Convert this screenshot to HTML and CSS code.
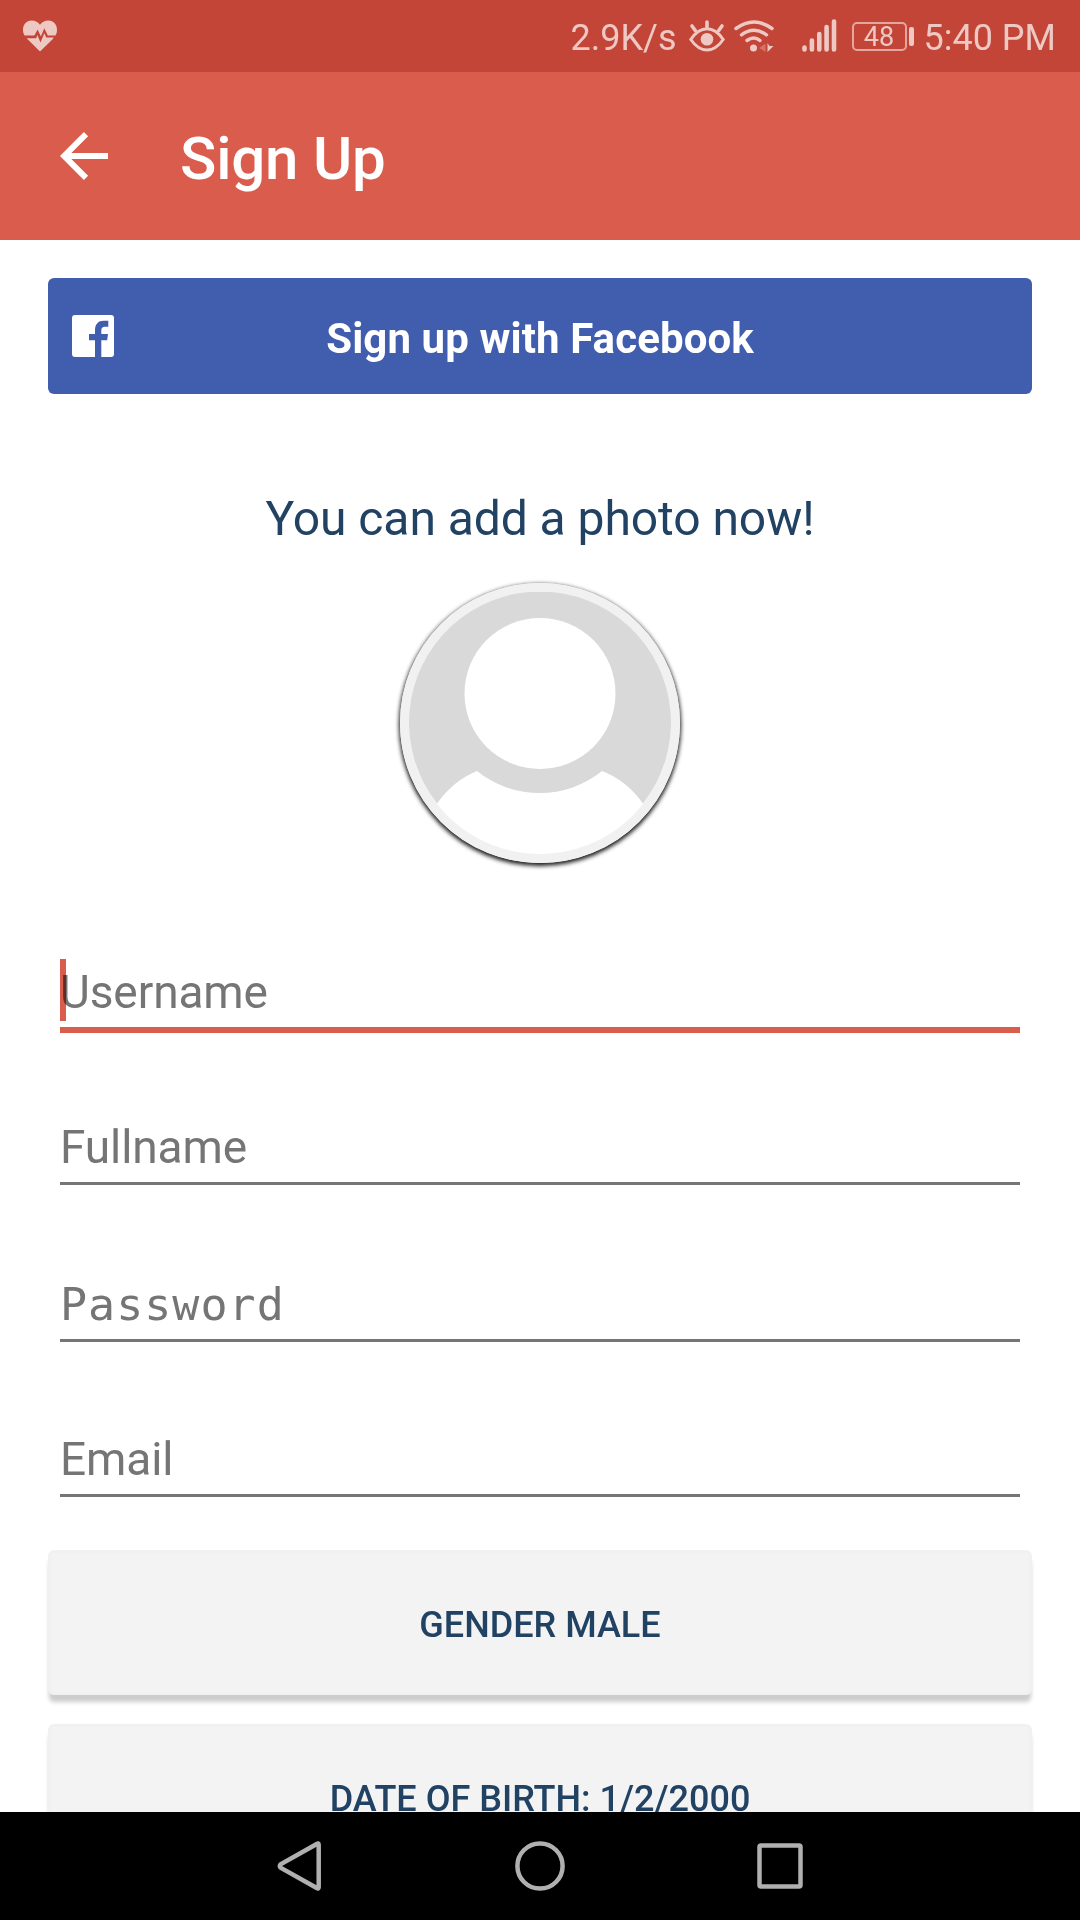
FILE: index.html
```html
<!DOCTYPE html>
<html lang="en">
<head>
    <meta charset="UTF-8">
    <meta name="viewport" content="width=device-width, initial-scale=1.0">
    <title>Sign Up</title>
    <link rel="stylesheet" href="styles.css">
</head>
<body>
    <div class="status-bar">
        <svg class="icon-heart" width="36" height="32" viewBox="0 0 36 32">
            <path fill="currentColor" d="M2.6 15.6C-1.2 9.500 2 .6 9.600 .6C13.400 .6 16.200 2.500 18 4.800C19.800 2.500 22.600 .6 26.400 .6C34 .6 37.200 9.500 33.400 15.6H25.800L22.300 8.300L18.900 16.600L15.600 9.500L12.400 15.6ZM4.600 18.200H14.200L15.400 15L18.500 22.400L22.300 13.200L24.300 17.600H31.800L30.600 19.200L18 31.600Z"/>
        </svg>

        <div class="status-right">
            <span class="speed">2.9K/s</span>
            <svg class="icon-eye" width="36" height="32" viewBox="0 0 36 32">
                <g fill="none" stroke="currentColor" stroke-width="3" stroke-linecap="round">
                    <path d="M1.800 19.500Q9 8.800 18 8.800T34.200 19.500Q27 30 18 30T1.800 19.500Z"/>
                    <path stroke-width="3.600" d="M18 2V7M3 6L6.300 10.500M33 6L29.700 10.500"/>
                </g>
                <circle cx="18" cy="19.300" r="6.300" fill="currentColor"/>
            </svg>
            <svg class="icon-wifi" width="40" height="32" viewBox="0 0 40 32">
                <g fill="none" stroke="currentColor" stroke-width="3.500" stroke-linecap="round">
                    <path d="M2 8.500Q20 -4.500 38 8.500"/>
                    <path d="M7.500 14.800Q20 5.800 32.500 14.800"/>
                    <path d="M13 20.500Q20 15.500 26 20.500"/>
                </g>
                <circle cx="19.500" cy="28" r="3.500" fill="currentColor"/>
                <path fill="currentColor" opacity=".35" d="M25 28L31.500 23.500V32Z"/>
                <path fill="currentColor" d="M33.500 23L35.500 26H39.500L33.500 32Z"/>
            </svg>
            <svg class="icon-signal" width="35" height="34" viewBox="0 0 35 34">
                <g stroke="currentColor" stroke-width="4.600" stroke-linecap="round">
                    <path d="M2.500 28.500V30.500M9.900 21.500V30.500M17.300 15V30.500M24.600 8V30.500M32 2.500V30.500"/>
                </g>
            </svg>
            <div class="battery"><span>48</span></div>
            <span class="clock">5:40 PM</span>
        </div>
    </div>

    <div class="app-bar">
        <svg class="icon-back" width="48" height="48" viewBox="0 0 48 48">
            <path fill="none" stroke="#fff" stroke-width="6" d="M48 24H5M26 2.200L4.200 24L26 45.800"/>
        </svg>
        <h1>Sign Up</h1>
    </div>

    <div class="content">
        <button type="button" class="facebook-button">
            <svg class="icon-facebook" width="42" height="42" viewBox="0 0 42 42">
                <rect width="42" height="42" rx="3" fill="#fff"/>
                <path fill="#415dae" d="M23 42V25.300H17V19H23V15C23 9 26.500 5.700 31.500 5.700H36.300V11.700H33C30.400 11.700 29.300 13 29.300 15.300V19H36L35.200 25.300H29.300V42Z"/>
            </svg>
            Sign up with Facebook
        </button>

        <p class="photo-text">You can add a photo now!</p>

        <div class="avatar">
            <svg width="262" height="262" viewBox="0 0 262 262">
                <path fill="#d9d9d9" d="M28 211.500A131 131 0 1 1 234 211.500Q217 188 193 179A99.500 99.500 0 0 1 68 179Q45 188 28 211.500Z"/>
                <circle cx="131" cy="101.500" r="75.500" fill="#fff"/>
            </svg>
        </div>

        <form class="signup-form">
            <div class="field focused">
                <input type="text" name="username" placeholder="Username">
                <span class="caret"></span>
            </div>
            <div class="field">
                <input type="text" name="fullname" placeholder="Fullname">
            </div>
            <div class="field password">
                <input type="password" name="password" placeholder="Password">
            </div>
            <div class="field">
                <input type="email" name="email" placeholder="Email">
            </div>

            <button type="button" class="option-button">GENDER MALE</button>
            <button type="button" class="option-button">DATE OF BIRTH: 1/2/2000</button>
        </form>
    </div>

    <div class="nav-bar">
        <svg width="52" height="52" viewBox="0 0 52 52">
            <path d="M44.700 4.700V47.300Q44.700 49.500 42.700 48L7 28Q4.500 26 7 24L42.700 4Q44.700 2.500 44.700 4.700Z"/>
        </svg>
        <svg width="52" height="52" viewBox="0 0 52 52">
            <circle cx="26" cy="26" r="22.600"/>
        </svg>
        <svg width="52" height="52" viewBox="0 0 52 52">
            <rect x="5.500" y="5.500" width="41" height="41" rx="1.500"/>
        </svg>
    </div>
</body>
</html>
```
FILE: styles.css
```css
* {
    box-sizing: border-box;
}
body {
    margin: 0;
    height: 1920px;
    display: flex;
    flex-direction: column;
    overflow: hidden;
    background-color: #fff;
    font-family: Roboto, sans-serif;
}
svg {
    display: block;
    flex: none;
}

/* Status bar */
.status-bar {
    flex: none;
    height: 72px;
    display: flex;
    align-items: center;
    justify-content: space-between;
    padding: 0 24px 0 22px;
    background-color: #c24537;
    color: #eec8c3;
    font-size: 36px;
}
.status-right {
    display: flex;
    align-items: center;
}
.speed,
.clock {
    line-height: 42px;
    padding-top: 3px;
}
.icon-eye {
    margin-left: 12px;
}
.icon-wifi {
    margin-left: 9px;
}
.icon-signal {
    margin-left: 28px;
}
.battery {
    position: relative;
    width: 55px;
    height: 29px;
    margin: 0 17px 0 15px;
    border: 2px solid #e3a79f;
    border-radius: 5px;
    font-size: 27px;
    line-height: 26px;
    text-align: center;
}
.battery::after {
    content: "";
    position: absolute;
    top: 3px;
    right: -9px;
    width: 5px;
    height: 19px;
    border-radius: 2px;
    background-color: #eec8c3;
}

/* App bar */
.app-bar {
    flex: none;
    height: 168px;
    display: flex;
    align-items: center;
    padding-left: 60px;
    background-color: #da5c4c;
}
.app-bar h1 {
    margin: 0 0 0 72px;
    padding-top: 5px;
    color: #fff;
    font-size: 60px;
    font-weight: 500;
    letter-spacing: -0.2px;
}

.content {
    flex: 1;
    min-height: 0;
    overflow: hidden;
    padding: 38px 48px 0;
}
.facebook-button {
    position: relative;
    display: block;
    width: 100%;
    height: 116px;
    padding: 5px 0 0;
    border: none;
    border-radius: 6px;
    background-color: #415dae;
    color: #fff;
    font-family: inherit;
    font-size: 42px;
    font-weight: bold;
    letter-spacing: 0.1px;
}
.icon-facebook {
    position: absolute;
    top: 37px;
    left: 24px;
}
.photo-text {
    margin: 95px 0 34px;
    color: #214263;
    font-size: 48px;
    line-height: 60px;
    letter-spacing: -0.06px;
    text-align: center;
}
.avatar {
    width: 280px;
    height: 280px;
    margin: 0 auto;
    border: 9px solid #f1f1f1;
    border-radius: 50%;
    box-shadow: 0 2px 4px 1px rgba(0, 0, 0, 0.9);
}

/* Form */
.signup-form {
    padding-top: 98px;
}
.field {
    position: relative;
    margin: 0 12px 86px;
    border-bottom: 3px solid #757575;
}
.field input {
    display: block;
    width: 100%;
    height: 66px;
    padding: 0 0 4px;
    border: none;
    outline: none;
    background: none;
    font-family: inherit;
    font-size: 46px;
    letter-spacing: -0.1px;
}
.field input::placeholder {
    color: #757575;
    opacity: 1;
}
.field.focused {
    margin-bottom: 83px;
    border-bottom: 6px solid #da5c4c;
}
.field.password {
    margin-top: 88px;
}
.field.password input {
    font-family: "DejaVu Sans Mono", monospace;
    font-size: 45px;
    letter-spacing: 1px;
}
.caret {
    position: absolute;
    top: -2px;
    left: 0;
    width: 6px;
    height: 62px;
    background-color: #da5c4c;
    mix-blend-mode: multiply;
}
.option-button {
    display: block;
    width: 100%;
    height: 145px;
    margin: -33px 0 62px;
    padding: 4px 0 0;
    border: 3px solid #f1f1f1;
    border-radius: 6px;
    background-color: #f3f3f3;
    box-shadow: 0 8px 4px -1px #ccc;
    color: #214263;
    font-family: inherit;
    font-size: 36px;
    font-weight: 500;
}

/* Navigation bar */
.nav-bar {
    flex: none;
    height: 108px;
    display: flex;
    align-items: center;
    justify-content: center;
    gap: 188px;
    background-color: #000;
}
.nav-bar svg {
    fill: none;
    stroke: #b0b0b0;
    stroke-width: 4.500;
}
```
